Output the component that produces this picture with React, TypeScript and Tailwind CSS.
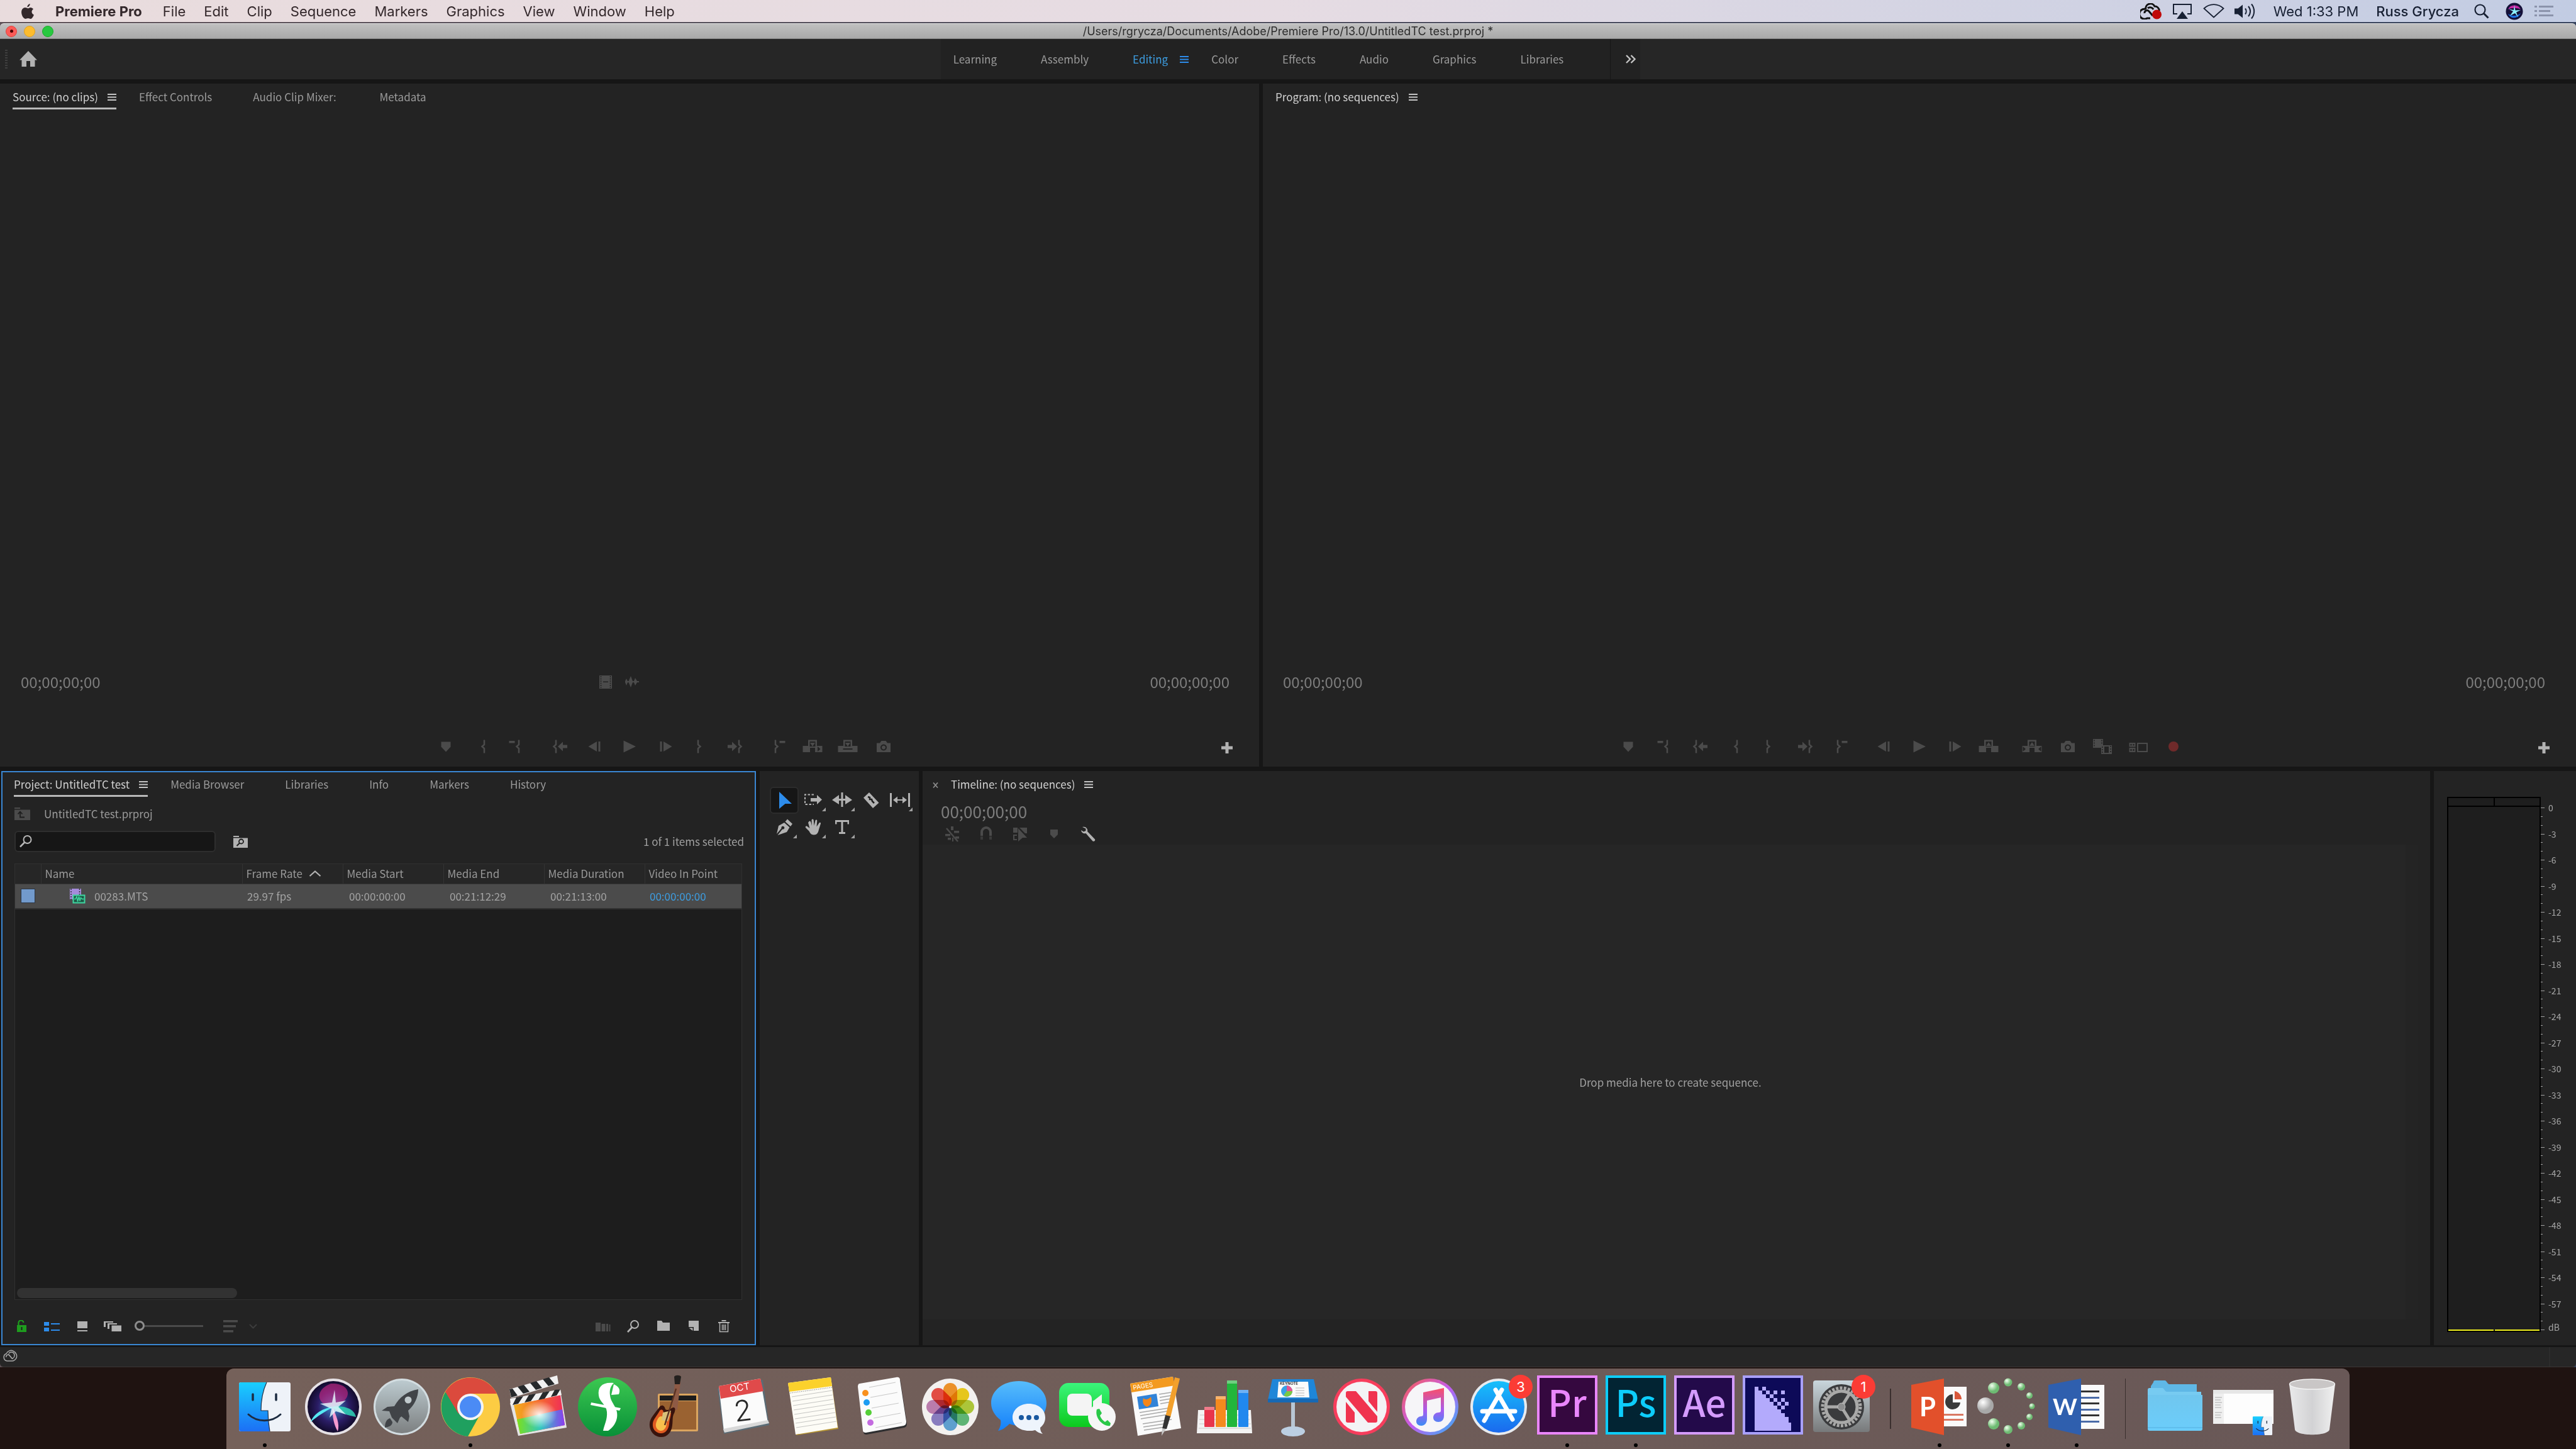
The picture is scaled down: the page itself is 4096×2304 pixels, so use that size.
import type { ReactNode } from 'react'

interface Tab {
  label: string
  active?: boolean
}

interface TransportItem {
  name: string
  art: ReactNode
  dx: number
}

interface DockItem {
  name: string
  art: ReactNode
  running?: boolean
  badge?: string
}

const menus = ['File', 'Edit', 'Clip', 'Sequence', 'Markers', 'Graphics', 'View', 'Window', 'Help']

const workspaces: Tab[] = [
  { label: 'Learning' },
  { label: 'Assembly' },
  { label: 'Editing', active: true },
  { label: 'Color' },
  { label: 'Effects' },
  { label: 'Audio' },
  { label: 'Graphics' },
  { label: 'Libraries' },
]

/* ---------- shared bits ---------- */

function Burger({ className = '' }: { className?: string }) {
  return (
    <svg viewBox="0 0 14 11" className={`h-[11px] w-[14px] shrink-0 ${className}`} fill="currentColor">
      <path d="M0 0h14v2H0zM0 4.5h14v2H0zM0 9h14v2H0z" />
    </svg>
  )
}

function PanelTabs({ tabs, underline = true }: { tabs: Tab[]; underline?: boolean }) {
  return (
    <div role="tablist" className="flex h-[41px] shrink-0 pl-5 text-[17px] leading-5 text-[#9b9b9b]">
      {tabs.map((tab) =>
        tab.active ? (
          <button
            key={tab.label}
            role="tab"
            aria-selected
            className={`mr-9 flex items-center gap-[15px] border-b-[3px] pt-1 whitespace-nowrap text-[#d2d2d2] ${
              underline ? 'border-[#b9b9b9]' : 'border-transparent'
            }`}
          >
            {tab.label}
            <Burger className="text-[#c4c4c4]" />
          </button>
        ) : (
          <button
            key={tab.label}
            role="tab"
            aria-selected={false}
            className="mr-[65px] flex items-center border-b-[3px] border-transparent pt-1 whitespace-nowrap"
          >
            {tab.label}
          </button>
        )
      )}
    </div>
  )
}

/* ---------- mac menu bar ---------- */

function MenuBar() {
  return (
    <header className="flex h-[35px] shrink-0 items-center bg-linear-to-r from-[#e9dcdd] via-[#e6dce3] to-[#c2cce3] pr-9 pl-[34px] font-[Inter,sans-serif] text-[22px] leading-8 text-[#33282b]">
      <button aria-label="Apple menu" className="mr-[34px]">
        <svg viewBox="0 0 20 24" className="h-6 w-5" fill="currentColor">
          <path d="M13.600 0c.2 2.600-1.900 5.400-4.200 5.300C9.200 2.900 11.400.4 13.600 0zM14.300 5.900c2 0 3.700 1 4.700 2.600-3.800 2.300-3.100 7.500.9 9-.8 2.300-2.900 6.200-5 6.400-1.600.1-2.300-1-4.300-1s-2.800 1-4.300 1C3.300 23.900.1 18.300.1 13.600.1 8.900 3 6.100 6 6.100c1.900 0 3.300 1.200 4.400 1.200 1 0 2.300-1.400 3.900-1.400z" />
        </svg>
      </button>
      <nav className="flex items-center gap-[29px]">
        <button className="mr-1 font-bold">Premiere Pro</button>
        {menus.map((m) => (
          <button key={m}>{m}</button>
        ))}
      </nav>
      <div className="ml-auto flex items-center text-[#172033]">
        <button aria-label="Creative Cloud" className="mr-[18px]">
          <svg viewBox="0 0 34 26" className="h-[26px] w-[34px]" fill="none" stroke="#111" strokeWidth="3">
            <path d="M9 9.500A8 8 0 1 0 11 24h5M9 10a7.500 7.500 0 0 1 14-5c4 0 7 3 7.500 7M7 16a4 4 0 0 1 7-3l6 7M12 8a6 6 0 0 1 9 2" />
            <circle cx="26.500" cy="18" r="7.500" fill="#c00a0a" stroke="none" />
          </svg>
        </button>
        <button aria-label="AirPlay" className="mr-[18px]">
          <svg viewBox="0 0 30 24" className="h-6 w-[30px]">
            <path d="M7 16H1V1h28v15h-6" fill="none" stroke="currentColor" strokeWidth="2" />
            <path d="M15 12l9 12H6z" fill="currentColor" />
          </svg>
        </button>
        <button aria-label="Wi-Fi" className="mr-4">
          <svg viewBox="0 0 34 23" className="h-[23px] w-[34px]" fill="none" stroke="currentColor" strokeWidth="1.800">
            <path d="M1.500 7.500a22 22 0 0 1 31 0L17 21.500z" />
          </svg>
        </button>
        <button aria-label="Volume" className="mr-7">
          <svg viewBox="0 0 34 26" className="h-[26px] w-[34px]" fill="none" stroke="currentColor" strokeWidth="2">
            <path d="M0 8.500h5.500L13 2.500v21l-7.500-6H0z" fill="currentColor" stroke="none" />
            <path d="M17 8.500a7 7 0 0 1 0 9M22 5a12 12 0 0 1 0 16M27 1.500a18 18 0 0 1 0 23" />
          </svg>
        </button>
        <button className="mr-7">Wed 1:33 PM</button>
        <button className="mr-6 font-medium">Russ Grycza</button>
        <button aria-label="Spotlight" className="mr-[26px]">
          <svg viewBox="0 0 24 24" className="h-6 w-6" fill="none" stroke="currentColor" strokeWidth="2.200">
            <circle cx="9.500" cy="9.500" r="8" />
            <path d="M15.500 15.500l7 7" strokeWidth="3" />
          </svg>
        </button>
        <button aria-label="Siri" className="mr-[18px]">
          <svg viewBox="0 0 28 28" className="h-7 w-7">
            <circle cx="14" cy="14" r="13.500" fill="#141038" />
            <path d="M4 11a11 11 0 0 1 20 0c-5-3-15-3-20 0z" fill="#c127a2" />
            <path d="M4 18c4 9 16 8 20-1-6 5-14 5-20 1z" fill="#1b6fe0" />
            <path d="M14 4l1.500 8.500L24 12l-7 3.500 3 8-5-6.500-8 4 5-7-7-3.500 8 1.500z" fill="#8df1ff" />
          </svg>
        </button>
        <button aria-label="Notification Center">
          <svg viewBox="0 0 30 18" className="h-[18px] w-[30px]" fill="#8b93ab">
            <path d="M0 0h4v3H0zM7 0h23v3H7zM0 7h4v3H0zM7 7h18v3H7zM0 14h4v3H0zM7 14h23v3H7z" />
          </svg>
        </button>
      </div>
    </header>
  )
}

function TitleBar() {
  return (
    <div className="relative flex h-[25px] shrink-0 items-center justify-center rounded-t-md border-t border-b border-t-[#e2e2e2] border-b-[#858585] bg-linear-to-b from-[#c0c0c0] to-[#a9a9a9] font-[Inter,sans-serif] text-[18px] leading-5 text-[#2c2c2c]">
      <div className="absolute left-[9px] flex gap-[11px]">
        <button
          aria-label="Close"
          className="flex size-[18px] items-center justify-center rounded-full border border-[#e0443e] bg-[#fc5b57]"
        >
          <span className="size-[5px] rounded-full bg-[#4d0000]" />
        </button>
        <button aria-label="Minimize" className="size-[18px] rounded-full border border-[#dea123] bg-[#fdbc2e]" />
        <button aria-label="Zoom" className="size-[18px] rounded-full border border-[#1aab29] bg-[#28c840]" />
      </div>
      <h1>/Users/rgrycza/Documents/Adobe/Premiere Pro/13.0/UntitledTC test.prproj *</h1>
    </div>
  )
}

function WorkspaceBar() {
  return (
    <div className="flex h-16 shrink-0 bg-[#262626] text-[17px] leading-5 text-[#9b9b9b]">
      <div className="flex flex-1 items-center pl-2">
        <div className="flex flex-col gap-[2px]">
          {[0, 1, 2, 3, 4, 5, 6, 7].map((n) => (
            <span key={n} className="h-[2px] w-1 bg-[#3f3f3f]" />
          ))}
        </div>
        <button aria-label="Home" className="ml-[19px]">
          <svg viewBox="0 0 28 26" className="h-[26px] w-7" fill="#b2b2b2">
            <path d="M14 0l14 14.500h-3.500V25H17v-9h-6v9H3.500V14.500H0z" />
          </svg>
        </button>
      </div>
      <div className="flex items-center bg-[#222222] pl-5">
        {workspaces.map((ws) =>
          ws.active ? (
            <button key={ws.label} className="mr-9 flex items-center gap-[19px] text-[#3d9de0]">
              {ws.label}
              <Burger className="text-[#2d8ceb]" />
            </button>
          ) : (
            <button key={ws.label} className="mr-[70px]">
              {ws.label}
            </button>
          )
        )}
        <button
          aria-label="More workspaces"
          className="ml-1 flex h-full w-12 items-center justify-center border-l border-[#161616] pl-4"
        >
          <svg viewBox="0 0 18 14" className="h-[14px] w-[18px]" fill="none" stroke="#c4c4c4" strokeWidth="2.400">
            <path d="M2 1l6 6-6 6M9.500 1l6 6-6 6" />
          </svg>
        </button>
      </div>
      <div className="flex-1" />
    </div>
  )
}

/* ---------- monitors ---------- */

const braceIn = <path d="M2 -10.500V-3L-1.500 0L2 3V10.500" fill="none" stroke="currentColor" strokeWidth="2.500" />
const braceOut = <path d="M-2 -10.500V-3L1.500 0L-2 3V10.500" fill="none" stroke="currentColor" strokeWidth="2.500" />
const marker = <path d="M-7.500 -7.500h15v8L0 8.500L-7.500 .5z" />
const clearIn = (
  <>
    <path d="M-8.500 -9h9v3.500h-9z" />
    <g transform="translate(5 0)">{braceIn}</g>
  </>
)
const clearOut = (
  <>
    <path d="M-.5 -9h9v3.500h-9z" />
    <g transform="translate(-5 0)">{braceOut}</g>
  </>
)
const goIn = (
  <>
    <g transform="translate(-9 0)">{braceIn}</g>
    <path d="M-4 0L4 -7.500V-2.500h7v5H4V7.500z" />
  </>
)
const goOut = (
  <>
    <g transform="translate(9 0)">{braceOut}</g>
    <path d="M4 0L-4 -7.500V-2.500h-7v5h7V7.500z" />
  </>
)
const stepBack = <path d="M-9.500 0L4 -8V8zM6.500 -8h3V8h-3z" />
const stepForward = <path d="M9.500 0L-4 -8V8zM-9.500 -8h3V8h-3z" />
const play = <path d="M-9.500 -9.500L10 0L-9.500 9.500z" />
const insert = (
  <>
    <path d="M-7 -10.500H7V-1h8.500v10H4V2H-4v7h-11.500V-1H-7zM-4.500 -8v8h9v-8z" fillRule="evenodd" />
    <path d="M-4 -6h8L0 0z" />
    <path d="M8 0l4.500 4L8 8z" fill="#232323" />
  </>
)
const overwrite = (
  <>
    <path d="M-7 -10.500H7V-1h8.500v10h-31V-1H-7zM-4.500 -8v8h9v-8z" fillRule="evenodd" />
    <path d="M-4 -6h8L0 0z" />
    <path d="M-7.500 3h15v2h-15z" fill="#232323" />
  </>
)
const lift = (
  <>
    <path d="M-7 -10.500H7V-1h8.500v10H4V2H-4v7h-11.500V-1H-7zM-4.500 -8v8h9v-8z" fillRule="evenodd" />
    <path d="M-4 -1h8L0 -7z" />
  </>
)
const extract = (
  <>
    {lift}
    <path d="M-14.500 0l4.500 4-4.500 4zM14.500 0L10 4l4.500 4z" fill="#232323" />
  </>
)
const camera = (
  <path
    d="M-11 -5.500h5l2.500 -3.500h7l2.500 3.500h5V9h-22zM0 -3.500a5 5 0 1 0 .01 0zM0 -1.500a3 3 0 1 1 -.01 0z"
    fillRule="evenodd"
  />
)
const compare = (
  <>
    <path d="M-15 -12H1V2h-16z" />
    <path d="M-2 -2H15v14H-2z" />
    <path d="M3 0h7v10H3z" fill="#232323" />
    <path
      d="M-13 -10.500v11M-1 -10.500v8M0 0v11M13 -1v12"
      fill="none"
      stroke="#232323"
      strokeWidth="1.500"
      strokeDasharray="2 2"
    />
  </>
)
const proxies = (
  <g fill="none" stroke="currentColor" strokeWidth="2">
    <path d="M-13.500 -5h8v4.500h-8zM-13.500 3h8v5h-8zM-1 -5h15V8H-1z" />
    <path d="M-9.500 -5v4M-9.500 3v5" />
  </g>
)
const record = <circle r="8" fill="#6f2a2a" />

const sourceTransport: TransportItem[] = [
  { name: 'Add Marker', art: marker, dx: 0 },
  { name: 'Mark In', art: braceIn, dx: 1 },
  { name: 'Clear In', art: clearIn, dx: -7 },
  { name: 'Go to In', art: goIn, dx: 8 },
  { name: 'Step Back 1 Frame', art: stepBack, dx: 4 },
  { name: 'Play', art: play, dx: 2 },
  { name: 'Step Forward 1 Frame', art: stepForward, dx: 2 },
  { name: 'Mark Out', art: braceOut, dx: -3 },
  { name: 'Go to Out', art: goOut, dx: -5 },
  { name: 'Clear Out', art: clearOut, dx: 9 },
  { name: 'Insert', art: insert, dx: 3 },
  { name: 'Overwrite', art: overwrite, dx: 1 },
  { name: 'Export Frame', art: camera, dx: 0 },
]

const programTransport: TransportItem[] = [
  { name: 'Add Marker', art: marker, dx: 0 },
  { name: 'Clear In', art: clearIn, dx: -3 },
  { name: 'Go to In', art: goIn, dx: -1 },
  { name: 'Mark In', art: braceIn, dx: -3 },
  { name: 'Mark Out', art: braceOut, dx: -9 },
  { name: 'Go to Out', art: goOut, dx: -9 },
  { name: 'Clear Out', art: clearOut, dx: -8 },
  { name: 'Step Back 1 Frame', art: stepBack, dx: 0 },
  { name: 'Play', art: play, dx: -1 },
  { name: 'Step Forward 1 Frame', art: stepForward, dx: -2 },
  { name: 'Lift', art: lift, dx: -7 },
  { name: 'Extract', art: extract, dx: 4 },
  { name: 'Export Frame', art: camera, dx: 3 },
  { name: 'Comparison View', art: compare, dx: 0 },
  { name: 'Toggle Proxies', art: proxies, dx: -1 },
  { name: 'Record', art: record, dx: -3 },
]

function Transport({ items, className }: { items: TransportItem[]; className: string }) {
  return (
    <div className="grid h-16 shrink-0 grid-cols-[1fr_auto_1fr] items-center pr-[42px]">
      <span />
      <div className={`flex text-[#4b4b4b] ${className}`}>
        {items.map((item) => (
          <button key={item.name} aria-label={item.name}>
            <svg viewBox={`${-29 - item.dx} -14 58 28`} className="h-7 w-[58px]" fill="currentColor">
              {item.art}
            </svg>
          </button>
        ))}
      </div>
      <button aria-label="Button editor" className="mt-1 justify-self-end">
        <svg viewBox="0 0 18 18" className="size-[18px]" fill="#b2b2b2">
          <path d="M6.500 0h5v6.500H18v5h-6.500V18h-5v-6.500H0v-5h6.500z" />
        </svg>
      </button>
    </div>
  )
}

function SourceMonitor() {
  return (
    <section className="flex min-w-0 flex-col bg-[#232323]">
      <PanelTabs
        tabs={[
          { label: 'Source: (no clips)', active: true },
          { label: 'Effect Controls' },
          { label: 'Audio Clip Mixer:\u00a0' },
          { label: 'Metadata' },
        ]}
      />
      <div className="flex-1" />
      <div className="flex h-[142px] shrink-0 items-center justify-between pr-[47px] pl-[33px] text-[24px] leading-7 text-[#7c7c7c]">
        <span>00;00;00;00</span>
        <div className="mr-5 flex items-center gap-[21px] text-[#4b4b4b]">
          <button aria-label="Drag Video Only">
            <svg viewBox="0 0 20 21" className="h-[21px] w-5" fill="currentColor">
              <path d="M0 0h20v21H0z" />
              <path d="M6 9.500h8v1.500H6z" fill="#232323" />
              <path d="M2.500 1v19M17.500 1v19" stroke="#232323" strokeWidth="1.500" strokeDasharray="2 1.500" />
            </svg>
          </button>
          <button aria-label="Drag Audio Only">
            <svg viewBox="0 0 22 18" className="h-[18px] w-[22px]" fill="currentColor">
              <path d="M0 8l2-4 2 4 1.500 0L9 0l3 8h2l2-5 3 5h3v2h-3l-3 5-2-5h-2l-3 8-3.500-8H4l-2 5-2-5z" />
            </svg>
          </button>
        </div>
        <span>00;00;00;00</span>
      </div>
      <Transport items={sourceTransport} className="ml-[154px]" />
    </section>
  )
}

function ProgramMonitor() {
  return (
    <section className="flex min-w-0 flex-col bg-[#232323]">
      <PanelTabs underline={false} tabs={[{ label: 'Program: (no sequences)', active: true }]} />
      <div className="flex-1" />
      <div className="flex h-[142px] shrink-0 items-center justify-between pr-[49px] pl-8 text-[24px] leading-7 text-[#7c7c7c]">
        <span>00;00;00;00</span>
        <span>00;00;00;00</span>
      </div>
      <Transport items={programTransport} className="mr-[14px]" />
    </section>
  )
}

/* ---------- project panel ---------- */

const columns = ['Name', 'Frame Rate', 'Media Start', 'Media End', 'Media Duration', 'Video In Point']

function SmallButton({ name, className = '', children }: { name: string; className?: string; children: ReactNode }) {
  return (
    <button aria-label={name} className={`flex w-12 items-center justify-center ${className}`}>
      <svg viewBox="0 0 28 20" className="h-5 w-7" fill="currentColor">
        {children}
      </svg>
    </button>
  )
}

function ProjectPanel() {
  return (
    <section className="ml-[2px] flex min-w-0 flex-col bg-[#232323] ring-2 ring-[#3a87d3] ring-inset">
      <PanelTabs
        tabs={[
          { label: 'Project: UntitledTC test', active: true },
          { label: 'Media Browser' },
          { label: 'Libraries' },
          { label: 'Info' },
          { label: 'Markers' },
          { label: 'History' },
        ]}
      />
      <div className="flex h-[54px] shrink-0 items-center gap-[22px] pl-[21px] text-[17px] leading-5 text-[#9b9b9b]">
        <svg viewBox="0 0 25 20" className="h-5 w-[25px]">
          <path d="M0 0h9v2H0zM0 3.500h25V20H0z" fill="#4b4b4b" />
          <path d="M9 7v8.500h7M5.500 10.500L9 6.500l3.500 4" fill="none" stroke="#1e1e1e" strokeWidth="1.800" />
        </svg>
        <span>UntitledTC test.prproj</span>
      </div>
      <div className="flex h-[34px] shrink-0 items-center pr-[19px] pl-[21px] text-[17px] leading-5 text-[#a0a0a0]">
        <label className="flex h-[34px] w-[320px] items-center rounded-md border-2 border-[#2e2e2e] bg-[#161616] pl-[6px]">
          <svg viewBox="0 0 20 20" className="size-5 shrink-0" fill="none" stroke="#b8b8b8">
            <circle cx="12.500" cy="7" r="6" strokeWidth="2" />
            <path d="M8 11.500L1 18.500" strokeWidth="2.500" />
          </svg>
          <input
            type="search"
            aria-label="Search project items"
            className="ml-2 w-full min-w-0 bg-transparent text-[17px] outline-none"
          />
        </label>
        <button aria-label="Create new search bin" className="ml-[28px]">
          <svg viewBox="0 0 23 19" className="h-[19px] w-[23px]">
            <path d="M0 0h9v2H0zM0 3.500h23V19H0z" fill="#b2b2b2" />
            <circle cx="12.500" cy="9" r="3.500" fill="none" stroke="#1e1e1e" strokeWidth="1.800" />
            <path d="M10 11.500L5.500 16" stroke="#1e1e1e" strokeWidth="2" />
          </svg>
        </button>
        <span className="ml-auto">1 of 1 items selected</span>
      </div>
      <div className="mt-[18px] mr-[22px] ml-[21px] flex min-h-0 flex-1 flex-col border border-[#303030] bg-[#1d1d1d]">
        <table className="w-full table-fixed text-left text-[17px] leading-5 text-[#999999]">
          <colgroup>
            <col className="w-[41px]" />
            <col className="w-[320px]" />
            <col className="w-[160px]" />
            <col className="w-[160px]" />
            <col className="w-[160px]" />
            <col className="w-[160px]" />
            <col />
          </colgroup>
          <thead>
            <tr className="h-[31px] border-b border-[#333333] bg-[#262626]">
              <th aria-label="Label" />
              {columns.map((c) => (
                <th key={c} className="border-l border-[#333333] pl-[6px] font-normal whitespace-nowrap">
                  <span className="flex items-center gap-[10px]">
                    {c}
                    {c === 'Frame Rate' && (
                      <svg viewBox="0 0 20 10" className="h-[10px] w-5" fill="none" stroke="#b2b2b2" strokeWidth="2.200">
                        <path d="M1.500 9L10 1.500 18.500 9" />
                      </svg>
                    )}
                  </span>
                </th>
              ))}
            </tr>
          </thead>
          <tbody>
            <tr className="h-10 border-b-2 border-[#303030] bg-[#4b4b4b] text-[#a3a3a3]">
              <td className="pl-[9px]">
                <span className="block size-[23px] border border-[#2b3542] bg-[#729acc]" />
              </td>
              <td className="pl-[46px]">
                <span className="flex items-center gap-[14px]">
                  <svg viewBox="0 0 25 24" className="h-6 w-[25px]">
                    <path d="M0 0h18v17H0z" fill="#a58bdb" />
                    <path d="M2 0v17M15.500 0v10" stroke="#2b2b2b" strokeWidth="1.500" strokeDasharray="2 2" />
                    <path d="M5.500 10.500h18v12h-18z" fill="#1d5a46" stroke="#3ed6a0" strokeWidth="2" />
                    <path d="M7 16.500h2l2-4 1.500 8 2-8 1.500 7 1.500-5 2 2h3" fill="none" stroke="#3ed6a0" strokeWidth="1.500" />
                  </svg>
                  00283.MTS
                </span>
              </td>
              <td className="pl-2">29.97 fps</td>
              <td className="pl-[10px]">00:00:00:00</td>
              <td className="pl-[10px]">00:21:12:29</td>
              <td className="pl-[10px]">00:21:13:00</td>
              <td className="pl-2 text-[#3d9de0]">00:00:00:00</td>
            </tr>
          </tbody>
        </table>
        <div className="mt-auto mb-[2px] ml-[3px] h-4 w-[350px] rounded-lg bg-[#323232]" />
      </div>
      <div className="flex h-[72px] shrink-0 items-center pt-[11px] pr-[27px] pl-[9px] text-[#b2b2b2]">
        <SmallButton name="Project writable" className="text-[#1e9c1e]">
          <path d="M6 8h15v11H6z" />
          <path d="M8.500 8V5a4 4 0 0 1 8-1" fill="none" stroke="currentColor" strokeWidth="2.200" />
          <path d="M12.500 11h2v5h-2z" fill="#1e1e1e" />
        </SmallButton>
        <SmallButton name="List View" className="text-[#2d8ceb]">
          <path d="M1 3h8v6H1zM12 5h14v2H12zM1 12h8v6H1zM12 15h14v2H12z" />
        </SmallButton>
        <SmallButton name="Icon View">
          <path d="M6 2h16v11H6zM6 16h16v2H6z" />
        </SmallButton>
        <SmallButton name="Freeform View">
          <path d="M0 2h15v2H3v7H0zM6 5h15v2H9v7H6zM12.500 8.500H28V18H12.500z" />
        </SmallButton>
        <input
          type="range"
          aria-label="Adjust icon size"
          min={0}
          max={100}
          defaultValue={0}
          className="ml-[11px] h-4 w-[109px] appearance-none bg-transparent [&::-webkit-slider-runnable-track]:h-[3px] [&::-webkit-slider-runnable-track]:bg-[#4b4b4b] [&::-webkit-slider-thumb]:-mt-[7px] [&::-webkit-slider-thumb]:size-4 [&::-webkit-slider-thumb]:appearance-none [&::-webkit-slider-thumb]:rounded-full [&::-webkit-slider-thumb]:border-[3px] [&::-webkit-slider-thumb]:border-[#8c8c8c] [&::-webkit-slider-thumb]:bg-[#232323]"
        />
        <button aria-label="Sort icons" className="ml-8 flex items-center gap-[18px] text-[#4b4b4b]">
          <svg viewBox="0 0 23 20" className="h-5 w-[23px]" fill="currentColor">
            <path d="M0 0h23v3.500H0zM0 8h20v3.500H0zM0 16h16v3.500H0z" />
          </svg>
          <svg viewBox="0 0 13 8" className="h-2 w-[13px]" fill="none" stroke="#3c3c3c" strokeWidth="2">
            <path d="M1 1l5.500 5.500L12 1" />
          </svg>
        </button>
        <div className="ml-auto flex">
          <SmallButton name="Automate to Sequence" className="text-[#4b4b4b]">
            <path d="M2 4h8v14H2zM11.500 6h6v12h-6zM19 6h3v12h-3zM23.500 7h2v11h-2z" />
          </SmallButton>
          <SmallButton name="Find">
            <circle cx="16" cy="7" r="6" fill="none" stroke="currentColor" strokeWidth="2" />
            <path d="M12 11.500L5 19" stroke="currentColor" strokeWidth="2.600" />
          </SmallButton>
          <SmallButton name="New Bin">
            <path d="M4 1h7l2 3h11v13H4z" />
          </SmallButton>
          <SmallButton name="New Item">
            <path d="M6 1h16v16h-8v-6H6zM6.500 12.500h6V17z" />
          </SmallButton>
          <SmallButton name="Clear">
            <path d="M5 3h18v2H5zM10.500 0h7v2h-7z" />
            <path d="M7.500 5v13.500h13V5M11.500 7v9M14 7v9M16.500 7v9" fill="none" stroke="currentColor" strokeWidth="1.500" />
          </SmallButton>
        </div>
      </div>
    </section>
  )
}

/* ---------- tools ---------- */

const tools: { name: string; art: ReactNode; more: boolean; selected?: boolean }[] = [
  { name: 'Selection Tool', art: <path d="M-8 -13L12 6H1.500L-8 14z" />, more: false, selected: true },
  {
    name: 'Track Select Forward Tool',
    art: (
      <>
        <path d="M1 -8.500H-13V7H1" fill="none" stroke="currentColor" strokeWidth="2" strokeDasharray="3.500 2.500" />
        <path d="M-4 -3H6v-5l8 7.500L6 7V2.500H-4z" />
      </>
    ),
    more: true,
  },
  {
    name: 'Ripple Edit Tool',
    art: <path d="M-1.500 -12h3v10H5v-6l11 8-11 7V1H1.500v10h-3V1H-5v6l-11-7 11-8v6h3.500z" />,
    more: true,
  },
  {
    name: 'Razor Tool',
    art: (
      <>
        <path d="M-3 -12L12.500 4.500 3 13 -12 -3.500z" />
        <path d="M-5 -5l3 1 0 3 3 0 1 3 3 3" fill="none" stroke="#1e1e1e" strokeWidth="2.500" />
      </>
    ),
    more: false,
  },
  {
    name: 'Slip Tool',
    art: <path d="M-16 -11h3v22h-3zM13 -11h3v22h-3zM-11 0l7-5.500V-1H4v-4.500L11 0 4 5.500V1H-4v4.500z" />,
    more: true,
  },
  {
    name: 'Pen Tool',
    art: (
      <>
        <path d="M5 -12.500L13 -5l-3 4L1.500 -8.500zM0 -7L8.500 .5 4 8l-14.500 5L-3 3.500a2.500 2.500 0 1 0-1.500-1.500L-12 11l3-13z" />
      </>
    ),
    more: true,
  },
  {
    name: 'Hand Tool',
    art: (
      <path d="M-6.500 -9c1.500-1 2.500 0 3 1.500L-2 -2l-.5-9c.3-2 3-2 3.200 0L1.500 -2l2-8.500c.5-1.700 3-1.200 2.800.5L5.500 -.5l4-6c1-1.500 3-.5 2.500 1L9 4c-1 5-3 8.500-8 8.500-4 0-6-3-7.500-6L-12 1c-1-2 1-3 2.500-2l4 3-2.500-9z" />
    ),
    more: true,
  },
  { name: 'Type Tool', art: <path d="M-11 -11h22v6.500H8.500V-8h-7V8H5v3H-5V8h3.500V-8h-7v3.500H-11z" />, more: true },
]

function ToolsPanel() {
  return (
    <section className="bg-[#232323] pt-[25px] pl-4">
      <div className="grid w-[230px] grid-cols-5">
        {tools.map((tool) => (
          <button
            key={tool.name}
            aria-label={tool.name}
            aria-pressed={!!tool.selected}
            className={`flex h-[43px] w-[46px] items-center justify-center rounded-md ${
              tool.selected ? 'border-2 border-[#2c2c2c] bg-[#161616] text-[#2d8ceb]' : 'text-[#b2b2b2]'
            }`}
          >
            <svg viewBox="-23 -21 46 43" className="h-[43px] w-[46px] shrink-0" fill="currentColor">
              {tool.art}
              {tool.more && <path d="M20 12v6h-6z" fill="#a0a0a0" />}
            </svg>
          </button>
        ))}
      </div>
    </section>
  )
}

/* ---------- timeline ---------- */

const timelineToggles: { name: string; art: ReactNode; bright?: boolean }[] = [
  {
    name: 'Insert and overwrite sequences as nests',
    art: (
      <>
        <path d="M-2 -12h4v6h-4zM3 -5h8v3.500H3zM-11 0h8v3.500h-8zM5 4h6v3.500H5zM-7 6h5v3.500h-5zM0 6h2v6H0z" />
        <path d="M-9 -9L9 12" stroke="currentColor" strokeWidth="2.500" />
      </>
    ),
  },
  {
    name: 'Snap',
    art: (
      <>
        <path d="M-7 3V-3a7 7 0 0 1 14 0V3" fill="none" stroke="currentColor" strokeWidth="4" />
        <path d="M-9 4h4v5h-4zM5 4h4v5H5z" fill="#3a3a3a" />
      </>
    ),
  },
  {
    name: 'Linked Selection',
    art: (
      <>
        <path d="M-11 -10h7v8h-7zM-1 -10h12v9H8zM-11 1h6v2h-4v5h4v2h-6z" />
        <path d="M-3 -9L11 6H4l-7 6z" />
      </>
    ),
  },
  { name: 'Add Marker', art: <path d="M-6 -7H6v8L0 7l-6-6z" /> },
  {
    name: 'Timeline Display Settings',
    art: (
      <path d="M-9 -11c3-1 7 0 8 4 .5 1.500 0 3 0 3L11 8.500c1 2-1 4-3.500 3L-3.500 -1c-3 .8-7-.5-7.500-5l4 2.500 3.500-1.500v-3.500z" />
    ),
    bright: true,
  },
]

function TimelinePanel() {
  return (
    <section className="flex min-w-0 flex-col bg-[#232323]">
      <div className="flex">
        <button aria-label="Close timeline" className="mt-1 ml-4 text-[#8a8a8a]">
          <svg viewBox="0 0 9 9" className="size-[9px]" fill="none" stroke="currentColor" strokeWidth="1.800">
            <path d="M1 .5l7 8M8 .5l-7 8" />
          </svg>
        </button>
        <PanelTabs underline={false} tabs={[{ label: 'Timeline: (no sequences)', active: true }]} />
      </div>
      <div className="flex h-[46px] shrink-0 items-center pl-[29px] text-[26px] leading-8 text-[#7c7c7c]">
        00;00;00;00
      </div>
      <div className="flex h-[30px] shrink-0 items-start pl-5">
        {timelineToggles.map((t) => (
          <button key={t.name} aria-label={t.name} className={t.bright ? 'text-[#b2b2b2]' : 'text-[#4b4b4b]'}>
            <svg viewBox="-27 -13 54 26" className="h-[26px] w-[54px]" fill="currentColor">
              {t.art}
            </svg>
          </button>
        ))}
      </div>
      <div className="mr-[19px] mb-[41px] flex flex-1 items-center justify-center border-r-[20px] border-[#242424] bg-[#262626] text-[17px] leading-5 text-[#a0a0a0]">
        <p className="pl-5">Drop media here to create sequence.</p>
      </div>
    </section>
  )
}

/* ---------- audio meters ---------- */

const levels = Array.from({ length: 20 }, (_, i) => (i === 0 ? '0' : String(-3 * i)))

function AudioMeters() {
  return (
    <section aria-label="Audio meters" className="flex bg-[#232323] pt-[41px] pb-[21px] pl-[21px]">
      <div className="grid w-[149px] grid-cols-2 grid-rows-[14px_1fr] border-2 border-black bg-[#1e1e1e]">
        <div className="border-r border-b-2 border-black" />
        <div className="border-b-2 border-l border-black" />
        <div className="mr-px border-b-2 border-[#f0f020]" />
        <div className="ml-px border-b-2 border-[#f0f020]" />
      </div>
      <div className="mt-[17px] mb-1 flex flex-col text-[14px] leading-4 text-[#a6a6a6]">
        {levels.map((level) => (
          <div key={level} className="flex flex-1">
            <div className="flex w-[6px] flex-col">
              <span className="w-[6px] flex-1 border-t border-[#a0a0a0]" />
              <span className="w-[3px] flex-1 border-t border-[#a0a0a0]" />
              <span className="w-[3px] flex-1 border-t border-[#a0a0a0]" />
            </div>
            <span className="-mt-2 ml-[6px]">{level}</span>
          </div>
        ))}
        <div className="flex h-0">
          <span className="h-px w-[6px] bg-[#a0a0a0]" />
          <span className="-mt-3 ml-[6px]">dB</span>
        </div>
      </div>
    </section>
  )
}

function StatusBar() {
  return (
    <footer className="flex h-8 shrink-0 items-start justify-between rounded-b-md border-b border-[#3a3634] bg-[#262626] pr-[41px] pl-1">
      <svg viewBox="0 0 24 19" className="mt-1 h-[19px] w-6" fill="none" stroke="#a8a8a8" strokeWidth="1.500">
        <path d="M7 18a6 6 0 0 1-1-11.500C8 2 13 0 17 2.200c5 2.300 7 8 4.500 12-2 3-4 3.800-6 3.800z" />
        <path d="M6 12a3 3 0 0 1 5-3l5 6M10 6a5 5 0 0 1 9 3c0 3-2 5-4 5L9 7" />
      </svg>
      <span className="h-full w-[2px] bg-[#2c2c2c]" />
    </footer>
  )
}

/* ---------- dock ---------- */

function AdobeTile({ text, edge, fill }: { text: string; edge: string; fill: string }) {
  return (
    <>
      <path d="M6 3h96v94H6z" fill={edge} />
      <path d="M10 7h88v86H10z" fill={fill} />
      <text
        x="54"
        y="69"
        textAnchor="middle"
        fontSize="58"
        fontWeight="500"
        fontFamily="'Noto Sans CJK SC', sans-serif"
        fill={edge}
      >
        {text}
      </text>
    </>
  )
}

function FinderFace() {
  return (
    <>
      <rect x="13" y="14" width="82" height="78" rx="3" fill="#eef2f8" />
      <path d="M16 14h41c-6 13-9 28-9 45h11c0 12 1 22 3 33H16a3 3 0 0 1-3-3V17a3 3 0 0 1 3-3z" fill="url(#finderBlue)" />
      <path d="M57 14c-6 13-9 28-9 45h11c0 12 1 22 3 33" fill="none" stroke="#22334a" strokeWidth="1.200" />
      <path d="M35 33v9M72 33v9" stroke="#1c2b40" strokeWidth="3.500" strokeLinecap="round" />
      <path d="M28 65c14 13 37 13 51 0" fill="none" stroke="#1c2b40" strokeWidth="3" strokeLinecap="round" />
    </>
  )
}

const petals: [number, string][] = [
  [0, '#f79a2c'],
  [45, '#f2d21f'],
  [90, '#b5d13c'],
  [135, '#63bf7c'],
  [180, '#63a8dc'],
  [225, '#8f83cb'],
  [270, '#c383b8'],
  [315, '#ee5147'],
]

const beads: [number, number, number][] = [
  [54, 14, 6.5],
  [75, 21, 6],
  [88, 35, 5],
  [92, 52, 4.5],
  [88, 69, 5],
  [75, 83, 6],
  [54, 89, 7],
  [31, 80, 9],
  [31, 23, 9],
]

const dockApps: DockItem[] = [
  { name: 'Finder', running: true, art: <FinderFace /> },
  {
    name: 'Siri',
    art: (
      <>
        <circle cx="54" cy="53" r="45" fill="#e6e2e6" />
        <circle cx="54" cy="53" r="41" fill="url(#siriBg)" />
        <path d="M54 53C26 50 24 26 50 16c30-2 40 24 4 37z" fill="#d12a86" opacity=".6" />
        <path d="M54 53c-18 2-32 12-36 24 14-12 26-18 36-24z" fill="#56e8f2" />
        <path d="M52 53c14-2 34 0 38 16-12-2-30-8-38-16z" fill="#2fd6b8" opacity=".85" />
        <path d="M53 54c5 12 12 26 8 38-6-10-9-24-8-38z" fill="#f59ad0" />
        <path d="M56 26l2 20 16-3-12 10 12 12-16-5-10 10 3-14-18-8 19-2z" fill="#e8fbff" opacity=".8" />
      </>
    ),
  },
  {
    name: 'Launchpad',
    art: (
      <>
        <circle cx="54" cy="53" r="45" fill="#d3dde1" />
        <circle cx="54" cy="53" r="42" fill="url(#launchBg)" />
        <path d="M80 25C62 28 50 38 42 52l-11 1-9 6 12 1 4 10 9 9 4-9c2-1 2-2 2-2l11 9 2-9-2-9c10-9 16-21 16-34z" fill="#414448" />
        <circle cx="64" cy="42" r="5.500" fill="#c0c9cc" />
        <path d="M35 71c-6 2-8 8-8 15 6-1 12-3 12-9z" fill="#414448" />
      </>
    ),
  },
  {
    name: 'Chrome',
    running: true,
    art: (
      <>
        <circle cx="54" cy="53" r="47" fill="#fccc43" />
        <path d="M54 53L14 29.500A47 47 0 0 0 50 100l20-36z" fill="#1fa05f" />
        <path d="M54 32h42A47 47 0 0 0 14 29l21 35z" fill="#db4a3d" />
        <circle cx="54" cy="53" r="21" fill="#f4f4f4" />
        <circle cx="54" cy="53" r="17" fill="#4b8bf5" />
      </>
    ),
  },
  {
    name: 'Final Cut Pro',
    art: (
      <>
        <path d="M8 47l80-20 10 59-77 13z" fill="#e4e4e6" />
        <path d="M14 50l74-16 7 48-71 14z" fill="url(#fcpRainbow)" />
        <path d="M19 73l72-16 4 25-71 14z" fill="url(#fcpLower)" />
        <path d="M14 50l74-16 7 48-71 14z" fill="url(#fcpGlow)" />
        <path d="M7 25L83 3l2 13L10 39z" fill="#f1f1f1" />
        <path d="M7 25l5-1 8 11-10 3zM20 21l10-3 9 11-10 3zM40 15l10-3 9 11-10 3zM60 9l10-3 9 11-10 3z" fill="#26292b" />
        <path d="M8 40l80-15 2 9-81 17z" fill="#f1f1f1" />
        <path d="M18 38l11-2-8 12-9 2zM38 34l11-2-8 12-10 2zM60 30l11-2-8 12-10 2zM79 26l9-1-6 10-9 2z" fill="#26292b" />
      </>
    ),
  },
  {
    name: 'Sync',
    art: (
      <>
        <circle cx="54" cy="53" r="47" fill="url(#greenDisc)" />
        <path d="M64 15c-18-2-26 6-24 20 1 10 12 14 13 26 1 12-4 20-6 30h8c12-8 18-22 12-36-4-8-8-12-9-20-1-8 0-14 6-20z" fill="#fff" />
        <path d="M64 17l-4 17 12-1c3-8 0-12-8-16zM28 46l47 9-2 4-46-9z" fill="#fff" />
      </>
    ),
  },
  {
    name: 'GarageBand',
    art: (
      <>
        <rect x="25" y="32" width="64" height="60" rx="2" fill="#dba55f" />
        <path d="M28 44h58v45H28z" fill="#9a6231" />
        <path d="M28 35h58v8H28z" fill="#1c1c1c" />
        <path d="M53 4l8-1v11l-5 44-8-1z" fill="#8e5a45" />
        <path d="M51 5c2-3 9-3 11 0l-2 12h-8z" fill="#23201e" />
        <path d="M27 54c4-6 9-3 10 3 5 3 9-2 12-3 5-1 4 6 1 11-2 5-1 10-2 17-1 12-9 20-19 19-11-1-18-11-17-22 1-9 8-15 15-25z" fill="#38130d" />
        <path d="M28 59c3-3 6-1 6 3 5 4 8 2 12 0 0 6-3 12-3 18-1 10-7 16-14 15-8-1-13-7-12-16 1-7 7-12 11-20z" fill="#de5a22" />
        <path d="M30 68c5 0 9 4 9 11s-5 13-10 12-8-6-7-11 4-12 8-12z" fill="#f8c04c" />
        <path d="M33 62l13-3-5 17-10-2z" fill="#d9c27a" />
        <path d="M54 24L36 82" stroke="#5a3223" strokeWidth="2.500" />
      </>
    ),
  },
  {
    name: 'Calendar',
    art: (
      <>
        <path d="M11 24l72-14 10 72-72 14z" fill="#5b6c76" />
        <path d="M13 20l66-12 12 70-70 14z" fill="#fbfbfb" />
        <path d="M13 20l66-12 5 20-68 12z" fill="#e04a4a" />
        <path d="M20 88l71-14 2 5-71 15z" fill="#d8d8d8" />
        <text transform="translate(31 30) rotate(-9)" fontSize="15" fontFamily="Inter, sans-serif" fill="#fff">
          OCT
        </text>
        <text transform="translate(39 77) rotate(-7)" fontSize="46" fontFamily="Inter, sans-serif" fontWeight="300" fill="#2a2a2a">
          2
        </text>
      </>
    ),
  },
  {
    name: 'Notes',
    art: (
      <>
        <path d="M14 15l68-9 12 82-67 10z" fill="#b79532" />
        <path d="M14 15l68-9 11 80-67 11z" fill="#fdfcf6" />
        <path d="M14 15l68-9 2 14-68 9z" fill="#fbd12c" />
        <path
          d="M20 37l64-10M21 44l64-10M22 51l64-10M23 58l64-10M24 65l64-10M25 72l64-10M26 79l64-10M27 86l64-10"
          stroke="#c5c5c2"
          strokeWidth="1"
        />
        <path d="M17 31l67-9" stroke="#9c9c98" strokeWidth="1.200" strokeDasharray="1.500 1.500" />
      </>
    ),
  },
  {
    name: 'Reminders',
    art: (
      <>
        <path d="M19 17l58-10c4-1 6 1 6 4l10 66c0 4-1 6-4 7l-60 11c-3 0-5-1-5-4L16 22c0-3 1-5 3-5z" fill="#2e2e30" transform="translate(1 2)" />
        <path d="M19 16l58-10c4-1 6 1 6 4l10 66c0 4-1 6-4 7l-60 11c-3 0-5-1-5-4L16 21c0-3 1-5 3-5z" fill="#fbfbfb" />
        <path d="M34 22l42-8M36 38l43-8M38 55l43-8M41 71l43-8M44 86l42-8" stroke="#c8c8c8" strokeWidth="1.200" />
        <circle cx="28" cy="31" r="5" fill="#f8901d" />
        <circle cx="30" cy="46" r="5" fill="#1c9cf2" />
        <circle cx="33" cy="62" r="5" fill="#55cf38" />
        <circle cx="36" cy="78" r="5" fill="#c46be0" />
      </>
    ),
  },
  {
    name: 'Photos',
    art: (
      <>
        <circle cx="54" cy="53" r="45" fill="#f3f1ef" />
        {petals.map(([angle, color]) => (
          <rect
            key={angle}
            x="43"
            y="15"
            width="22"
            height="37"
            rx="11"
            fill={color}
            className="mix-blend-multiply"
            transform={`rotate(${angle} 54 53)`}
          />
        ))}
        <circle cx="54" cy="53" r="2" fill="#fff" />
      </>
    ),
  },
  {
    name: 'Messages',
    art: (
      <>
        <path d="M54 12c25 0 44 15 44 35S80 83 56 83c-6 0-12-1-17-3-6 6-12 10-18 11 4-6 5-12 4-17C16 67 10 58 10 47c0-20 19-35 44-35z" fill="url(#msgBlue)" />
        <path d="M70 48c15 0 26 9 26 22 0 7-3 12-8 16 0 4 1 7 4 10-5-1-9-3-12-6-3 1-6 1-10 1-15 0-26-9-26-21s11-22 26-22z" fill="#eef4fc" />
        <circle cx="58" cy="70" r="4" fill="#1858a0" />
        <circle cx="70" cy="70" r="4" fill="#1858a0" />
        <circle cx="82" cy="70" r="4" fill="#1858a0" />
      </>
    ),
  },
  {
    name: 'FaceTime',
    art: (
      <>
        <rect x="9" y="15" width="80" height="70" rx="15" fill="url(#ftGreen)" />
        <rect x="22" y="32" width="39" height="35" rx="8" fill="#f4f4f4" />
        <path d="M63 44l14-11v20H63z" fill="#f4f4f4" />
        <circle cx="77" cy="69" r="22" fill="#f6f6f6" />
        <path d="M69 57l4-1 4 7-3 4c2 5 5 8 8 10l4-3 5 5-1 4c-11 2-25-13-21-26z" fill="#2ac848" />
      </>
    ),
  },
  {
    name: 'Pages',
    art: (
      <>
        <path d="M13 16l68-11 13 82-69 12z" fill="#fafafa" />
        <path d="M13 16l68-11 3 14-69 11z" fill="#f39a1f" />
        <path d="M24 37l31-5 3 20-31 5z" fill="#3183d8" />
        <path d="M34 39c4 4 8 2 12-2 3 9-1 14-6 16-6-2-8-7-6-14z" fill="#f4861a" />
        <path
          d="M59 33l19-3M60 38l18-3M60 43l18-3M61 48l18-3M28 62l52-8M29 67l48-8M30 72l44-7M33 80l46-7M34 85l40-6M35 90l34-5"
          stroke="#a8a8a8"
          strokeWidth="1.400"
        />
        <path d="M84 6l8 2-15 62-8-1z" fill="#f2a02c" />
        <path d="M69 66l8 2-6 20h-7z" fill="#333" />
        <path d="M64 87l6 1-7 11z" fill="#c8c8c8" />
        <text transform="translate(18 26) rotate(-9)" fontSize="10" fontFamily="Inter, sans-serif" fill="#fff">
          PAGES
        </text>
      </>
    ),
  },
  {
    name: 'Numbers',
    art: (
      <>
        <path d="M12 58h84l2 37H10z" fill="#f3f3f3" />
        <path d="M15 66h78M14 73h80M14 80h82M13 87h83" stroke="#c9c9c9" />
        <rect x="22" y="53" width="16" height="32" rx="1" fill="#e8354c" />
        <rect x="40" y="36" width="16" height="49" rx="1" fill="#f58a1e" />
        <rect x="58" y="11" width="16" height="74" rx="1" fill="#22b63c" />
        <rect x="76" y="26" width="16" height="59" rx="1" fill="#2188ee" />
        <path d="M22 53h16v5H22zM40 36h16v5H40zM58 11h16v5H58zM76 26h16v5H76z" fill="#fff" opacity=".35" />
      </>
    ),
  },
  {
    name: 'Keynote',
    art: (
      <>
        <path d="M51 42h6v48h-6z" fill="#b8c6d4" />
        <ellipse cx="54" cy="92" rx="19" ry="8" fill="#bccfe2" />
        <path d="M21 9h66l7 33v4H14v-4z" fill="#1e86d8" />
        <path d="M14 40h80v6H14z" fill="#1668b4" />
        <path d="M31 13h47l2 25H29z" fill="#fafafa" />
        <circle cx="44" cy="28" r="9" fill="#37a1e6" />
        <path d="M44 28V19a9 9 0 0 1 9 9z" fill="#e25694" />
        <path d="M44 28h9a9 9 0 0 1-14 7z" fill="#7ac943" />
        <path d="M58 23h14M58 27h14M58 31h14M58 35h14" stroke="#b5b5b5" />
        <text x="33" y="18" fontSize="6" fontWeight="700" fontFamily="Inter, sans-serif" fill="#333">
          KEYNOTE
        </text>
      </>
    ),
  },
  {
    name: 'News',
    art: (
      <>
        <circle cx="54" cy="53" r="45" fill="#f73d5c" />
        <circle cx="54" cy="53" r="40" fill="#f3f3f5" />
        <path d="M32 28h13l34 40v7c0 2-1 3-3 3H64L29 37v-6c0-2 1-3 3-3z" fill="#f0334f" />
        <path d="M65 28h11c2 0 3 1 3 3v30L65 44zM29 45l14 17v16H32c-2 0-3-1-3-3z" fill="#f0334f" />
      </>
    ),
  },
  {
    name: 'iTunes',
    art: (
      <>
        <circle cx="54" cy="53" r="45" fill="url(#itunesRing)" />
        <circle cx="54" cy="53" r="40" fill="#f6f5f8" />
        <path d="M43 30l33-7v44c0 7-4 10-9 10s-8-3-8-7c0-5 4-8 8-8 3 0 4-1 4-3V38l-22 5v29c0 7-4 11-9 11s-8-3-8-7c0-5 4-8 8-8 2 0 3-1 3-3z" fill="url(#itunesNote)" />
      </>
    ),
  },
  {
    name: 'App Store',
    badge: '3',
    art: (
      <>
        <circle cx="54" cy="53" r="45" fill="#e8ebee" />
        <circle cx="54" cy="53" r="41" fill="url(#storeBlue)" />
        <path d="M59 26L36 66M49 26l27 47M28 60h52M34 70l-3 5" stroke="#fff" strokeWidth="7" strokeLinecap="round" />
      </>
    ),
  },
  { name: 'Premiere Pro', running: true, art: <AdobeTile text="Pr" edge="#ea86fc" fill="#35083f" /> },
  { name: 'Photoshop', running: true, art: <AdobeTile text="Ps" edge="#0dcdfb" fill="#022433" /> },
  { name: 'After Effects', art: <AdobeTile text="Ae" edge="#d49bff" fill="#230a4a" /> },
  {
    name: 'Media Encoder',
    art: (
      <>
        <path d="M6 3h96v94H6z" fill="#a9a0fc" />
        <path d="M10 7h88v86H10z" fill="#0d0a58" />
        <path d="M25 21h6v6h6v6h6v6h6v6h6v6h6v6h6v6h6v6h6v9h4v13H25z" fill="#b3aafc" />
        <path d="M37 21h6v6h-6zM43 27h6v6h-6zM55 27h6v6h-6zM67 27h6v6h-6zM49 33h6v6h-6zM55 39h6v6h-6zM67 39h6v6h-6zM61 45h6v6h-6zM73 45h6v6h-6zM67 51h6v6h-6z" fill="#b3aafc" />
      </>
    ),
  },
  {
    name: 'System Preferences',
    badge: '1',
    art: (
      <>
        <rect x="9" y="11" width="90" height="82" rx="4" fill="url(#prefsBg)" />
        <circle cx="54" cy="53" r="36" fill="#3a3b3d" />
        <circle cx="54" cy="53" r="30" fill="none" stroke="#a9a9a8" strokeWidth="5" strokeDasharray="4 2.300" />
        <circle cx="54" cy="53" r="25" fill="none" stroke="#a9a9a8" strokeWidth="5" />
        <path d="M54 53h-25M54 53l13-21M54 53l13 21" stroke="#a9a9a8" strokeWidth="5" />
        <circle cx="54" cy="53" r="6" fill="#8e8e8e" stroke="#c4c4c4" />
      </>
    ),
  },
]

const openApps: DockItem[] = [
  {
    name: 'PowerPoint',
    running: true,
    art: (
      <>
        <path d="M55 21h42v63H55z" fill="#fafafa" />
        <path d="M75 33a12 12 0 1 0 12 13H75z" fill="#3b3b3b" />
        <path d="M78 28a13 13 0 0 1 11 13H78z" fill="#d9583b" />
        <path d="M61 64h31v3H61zM61 72h31v3H61z" fill="#d97862" />
        <path d="M9 18l52-10v90L9 86z" fill="#e2502b" />
        <text x="22" y="68" fontSize="42" fontWeight="700" fontFamily="Lato, sans-serif" fill="#fff">
          P
        </text>
      </>
    ),
  },
  {
    name: 'Activity',
    running: true,
    art: (
      <>
        {beads.map(([x, y, r]) => (
          <circle key={`${x}-${y}`} cx={x} cy={y} r={r} fill="url(#beadGreen)" />
        ))}
        <circle cx="18" cy="51" r="13" fill="url(#beadWhite)" />
      </>
    ),
  },
  {
    name: 'Word',
    running: true,
    art: (
      <>
        <path d="M55 18h43v70H55z" fill="#fafafa" />
        <path d="M60 27h30v3H60zM60 46h30v3H60zM60 65h30v3H60z" fill="#333" />
        <path d="M60 37h30v3H60zM60 56h30v3H60zM60 75h30v3H60z" fill="#4a6ba8" />
        <path d="M9 18l52-10v90L9 86z" fill="#2f5fae" />
        <text x="16" y="66" fontSize="37" fontWeight="700" fontFamily="Lato, sans-serif" fill="#fff">
          W
        </text>
      </>
    ),
  },
]

const dockFiles: DockItem[] = [
  {
    name: 'Documents',
    art: (
      <>
        <path d="M20 14c0-2 1-3 3-3h15c3 0 4 5 7 6h44v30H16V20z" fill="#5fb8e6" />
        <path d="M11 26c0-2 1-3 3-3h20c3 0 4 5 7 6h55v30H11z" fill="#77cbf1" />
        <path d="M11 34h87v54c0 2-1 3-3 3H14c-2 0-3-1-3-3z" fill="url(#folderBlue)" />
        <path d="M11 86h87" stroke="#55b0e0" />
      </>
    ),
  },
  {
    name: 'Minimized window',
    art: (
      <>
        <path d="M6 26h96v54H6z" fill="#fdfdfd" />
        <path d="M6 26h96v6H6z" fill="#e6e6e6" />
        <path d="M6 32h17v48H6z" fill="#efefef" />
        <path d="M9 38h11M9 42h9M9 46h11M9 50h9M9 54h10M9 62h11M9 66h9M9 70h10" stroke="#aaa" />
        <g transform="translate(64 63) scale(.38)">
          <FinderFace />
        </g>
      </>
    ),
  },
  {
    name: 'Trash',
    art: (
      <>
        <path d="M18 17h73l-9 72c-2 11-53 11-55 0z" fill="url(#trashGrey)" />
        <ellipse cx="54.500" cy="17" rx="36" ry="8" fill="#c9c6c6" stroke="#f2f2f2" strokeWidth="1.500" />
      </>
    ),
  },
]

function DockIcon({ item }: { item: DockItem }) {
  return (
    <button aria-label={item.name} className="relative flex h-32 w-[109px] flex-col items-center pt-2">
      <svg viewBox="0 0 108 104" className="h-[104px] w-[108px] overflow-visible">
        {item.art}
      </svg>
      {item.running && <span className="mt-[7px] size-[6px] rounded-full bg-black" />}
      {item.badge && (
        <span className="absolute top-[10px] right-0 flex size-[38px] items-center justify-center rounded-full bg-[#fb3c35] font-[Inter,sans-serif] text-[22px] leading-none text-white">
          {item.badge}
        </span>
      )}
    </button>
  )
}

// gradients referenced by the dock artwork
function DockGradients() {
  return (
    <svg className="absolute size-0" aria-hidden>
      <defs>
        <linearGradient id="finderBlue" x2="0" y2="1">
          <stop offset="0" stopColor="#19cffe" />
          <stop offset="1" stopColor="#1c6ff5" />
        </linearGradient>
        <radialGradient id="siriBg">
          <stop offset="0" stopColor="#3b8fd0" />
          <stop offset=".6" stopColor="#2b1d66" />
          <stop offset="1" stopColor="#120b2c" />
        </radialGradient>
        <linearGradient id="launchBg" x2="0" y2="1">
          <stop offset="0" stopColor="#bccacf" />
          <stop offset="1" stopColor="#7d8081" />
        </linearGradient>
        <linearGradient id="fcpRainbow" x2="1" y2="0">
          <stop offset="0" stopColor="#f2b01e" />
          <stop offset=".45" stopColor="#f5702a" />
          <stop offset="1" stopColor="#f02a5a" />
        </linearGradient>
        <linearGradient id="fcpLower" x2="1" y2="0">
          <stop offset="0" stopColor="#7be01c" />
          <stop offset=".5" stopColor="#32c8c0" />
          <stop offset="1" stopColor="#8a3cf0" />
        </linearGradient>
        <radialGradient id="fcpGlow">
          <stop offset="0" stopColor="#fff" stopOpacity=".9" />
          <stop offset=".7" stopColor="#fff" stopOpacity="0" />
        </radialGradient>
        <linearGradient id="greenDisc" x2="0" y2="1">
          <stop offset="0" stopColor="#3cc851" />
          <stop offset="1" stopColor="#089038" />
        </linearGradient>
        <linearGradient id="msgBlue" x2="0" y2="1">
          <stop offset="0" stopColor="#57bdfb" />
          <stop offset="1" stopColor="#1480fb" />
        </linearGradient>
        <linearGradient id="ftGreen" x2="0" y2="1">
          <stop offset="0" stopColor="#3bf57c" />
          <stop offset="1" stopColor="#0cc91d" />
        </linearGradient>
        <linearGradient id="itunesRing" x2="1" y2="1">
          <stop offset="0" stopColor="#fb5c4b" />
          <stop offset=".5" stopColor="#c35cf0" />
          <stop offset="1" stopColor="#2ab8f6" />
        </linearGradient>
        <linearGradient id="itunesNote" x2="0" y2="1">
          <stop offset="0" stopColor="#fb4f67" />
          <stop offset=".6" stopColor="#a55cf0" />
          <stop offset="1" stopColor="#3b8cf4" />
        </linearGradient>
        <linearGradient id="storeBlue" x2="0" y2="1">
          <stop offset="0" stopColor="#17c0fb" />
          <stop offset="1" stopColor="#1a69ee" />
        </linearGradient>
        <linearGradient id="prefsBg" x2="0" y2="1">
          <stop offset="0" stopColor="#c9d6dc" />
          <stop offset="1" stopColor="#77797a" />
        </linearGradient>
        <radialGradient id="beadGreen" cx=".35" cy=".3">
          <stop offset="0" stopColor="#f2fff0" />
          <stop offset="1" stopColor="#6dbb72" />
        </radialGradient>
        <radialGradient id="beadWhite" cx=".35" cy=".3">
          <stop offset="0" stopColor="#ffffff" />
          <stop offset="1" stopColor="#a8a8a8" />
        </radialGradient>
        <linearGradient id="folderBlue" x2="0" y2="1">
          <stop offset="0" stopColor="#70c6ee" />
          <stop offset="1" stopColor="#6bcdfb" />
        </linearGradient>
        <linearGradient id="trashGrey" x2="1" y2="0">
          <stop offset="0" stopColor="#e9e9ea" />
          <stop offset=".5" stopColor="#d2d2d4" />
          <stop offset="1" stopColor="#f0f0f0" />
        </linearGradient>
      </defs>
    </svg>
  )
}

function Dock() {
  return (
    <nav
      aria-label="Dock"
      className="mt-[2px] flex h-32 shrink-0 self-center rounded-t-xl bg-linear-to-r from-[#75615a] to-[#695857] px-[6px]"
    >
      <DockGradients />
      {dockApps.map((item) => (
        <DockIcon key={item.name} item={item} />
      ))}
      <div className="flex w-[47px] justify-center pt-8">
        <span className="h-16 w-[2px] bg-[#3a2f2e]" />
      </div>
      {openApps.map((item) => (
        <DockIcon key={item.name} item={item} />
      ))}
      <div className="flex w-[47px] justify-center pt-4">
        <span className="h-24 w-px bg-[#3a2f2e]" />
      </div>
      {dockFiles.map((item) => (
        <DockIcon key={item.name} item={item} />
      ))}
    </nav>
  )
}

export default function App() {
  return (
    <div className="flex h-screen flex-col overflow-hidden bg-[#1f1311] font-['Noto_Sans_CJK_SC','Noto_Sans',sans-serif]">
      <MenuBar />
      <main className="flex min-h-0 flex-1 flex-col bg-linear-to-r from-[#5d5056] to-[#35425c] pt-[2px]">
        <TitleBar />
        <WorkspaceBar />
        <div className="grid min-h-0 flex-1 grid-rows-[minmax(0,1086fr)_minmax(0,913fr)] gap-[7px] bg-[#161616] pt-[7px] pb-[3px]">
          <div className="grid grid-cols-[minmax(0,2002fr)_minmax(0,2088fr)] gap-[6px]">
            <SourceMonitor />
            <ProgramMonitor />
          </div>
          <div className="grid grid-cols-[minmax(0,1202fr)_253px_minmax(0,2397fr)_226px] gap-[6px]">
            <ProjectPanel />
            <ToolsPanel />
            <TimelinePanel />
            <AudioMeters />
          </div>
        </div>
        <StatusBar />
      </main>
      <Dock />
    </div>
  )
}
